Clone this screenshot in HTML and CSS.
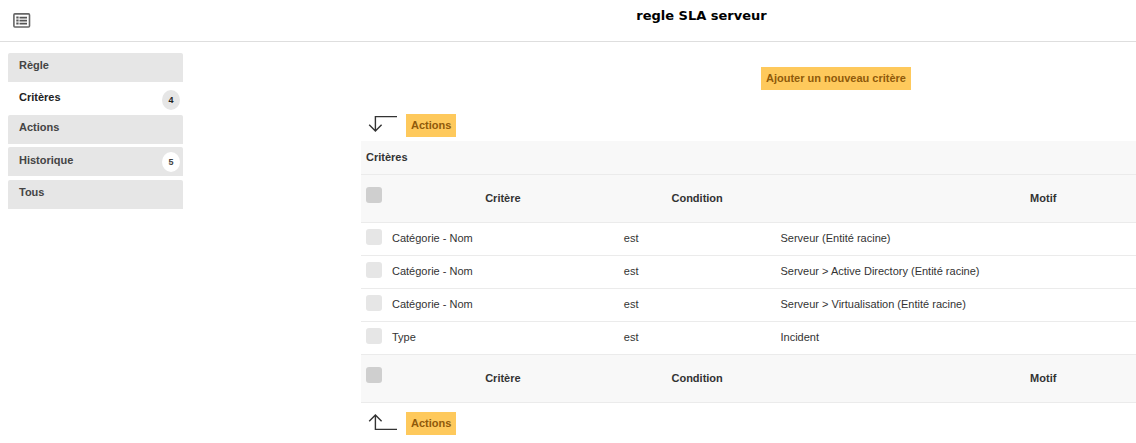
FILE: index.html
```
<!DOCTYPE html>
<html lang="fr">
<head>
<meta charset="utf-8">
<title>regle SLA serveur</title>
<link rel="stylesheet" href="styles.css">
</head>
<body>
<div class="page">
  <header class="header">
    <svg class="list-icon" width="18" height="15" viewBox="0 0 18 15">
      <rect x="0.9" y="0.9" width="15.6" height="13.1" rx="1" fill="none" stroke="#666" stroke-width="1.6"/>
      <path d="M6.5 4.6H14M6.5 7.6H14M6.5 10.6H14" stroke="#555" stroke-width="1.6"/>
      <path d="M3.3 4.6H5.6M3.3 7.6H5.6M3.3 10.6H5.6" stroke="#555" stroke-width="2"/>
    </svg>
    <h1 class="title">regle SLA serveur</h1>
  </header>
  <div class="layout">
    <nav class="tabs">
      <a class="tab">Règle</a>
      <a class="tab tab-active">Critères<span class="badge">4</span></a>
      <a class="tab">Actions</a>
      <a class="tab tab-history">Historique<span class="badge">5</span></a>
      <a class="tab tab-all">Tous</a>
    </nav>
    <main class="content">
      <div class="add-row"><a class="button">Ajouter un nouveau critère</a></div>
      <div class="actions">
        <svg class="arrow" width="30" height="18" viewBox="0 0 30 18"><path d="M29 2.6H7.4V16.6M1.2 10.8L7.4 17L13.6 10.8" fill="none" stroke="#333" stroke-width="1.4"/></svg>
        <a class="button">Actions</a>
      </div>
      <table class="criteria">
        <colgroup><col class="col-check"><col class="col-name"><col class="col-condition"><col></colgroup>
        <thead>
          <tr class="caption"><th colspan="4">Critères</th></tr>
          <tr class="heading"><th><span class="check"></span></th><th>Critère</th><th>Condition</th><th>Motif</th></tr>
        </thead>
        <tbody>
          <tr><td><span class="check"></span></td><td>Catégorie - Nom</td><td>est</td><td>Serveur (Entité racine)</td></tr>
          <tr><td><span class="check"></span></td><td>Catégorie - Nom</td><td>est</td><td>Serveur &gt; Active Directory (Entité racine)</td></tr>
          <tr><td><span class="check"></span></td><td>Catégorie - Nom</td><td>est</td><td>Serveur &gt; Virtualisation (Entité racine)</td></tr>
          <tr><td><span class="check"></span></td><td>Type</td><td>est</td><td>Incident</td></tr>
        </tbody>
        <tfoot>
          <tr class="heading"><th><span class="check"></span></th><th>Critère</th><th>Condition</th><th>Motif</th></tr>
        </tfoot>
      </table>
      <div class="actions actions-bottom">
        <svg class="arrow" width="30" height="19" viewBox="0 0 30 19"><path d="M29 17.4H7.4V3.2M1.2 9.2L7.4 3L13.6 9.2" fill="none" stroke="#333" stroke-width="1.4"/></svg>
        <a class="button">Actions</a>
      </div>
    </main>
  </div>
</div>
</body>
</html>
```

FILE: styles.css
```
* { box-sizing: border-box; }
html { overflow: hidden; }
body {
  margin: 0;
  height: 443px;
  overflow: hidden;
  background: #fff;
  color: #333;
  font: 11px/13px "Liberation Sans", Arial, sans-serif;
}
.page { width: 1403px; }
.header {
  display: grid;
  grid-template-columns: 18px 1fr 18px;
  height: 42px;
  padding: 0 13px;
  border-bottom: 1px solid #dedede;
}
.list-icon { margin-top: 13px; }
.title {
  margin: 8px 0 0;
  color: #000;
  font: bold 13px/16px "DejaVu Sans", Verdana, sans-serif;
  text-align: center;
}
.layout { display: flex; }
.tabs {
  width: 175px;
  margin: 11px 178px 0 8px;
}
.tab {
  display: flex;
  justify-content: space-between;
  height: 29px;
  padding: 6px 3px 0 11px;
  border-radius: 2px 2px 0 0;
  background: #e6e6e6;
  color: #444;
  font-weight: bold;
}
.tab-active {
  margin: 3px 0 1px;
  background: #fff;
  color: #222;
}
.tab-history { margin-top: 3px; padding-top: 7px; }
.tab-all { margin-top: 4px; }
.badge {
  width: 18px;
  height: 20px;
  margin-top: -1px;
  border-radius: 50%;
  background: #e6e6e6;
  font-size: 9px;
  line-height: 20px;
  text-align: center;
}
.tab-history .badge { margin-top: -2px; background: #fff; }
.content { width: 950px; padding-top: 25px; }
.add-row {
  display: flex;
  justify-content: center;
  margin-bottom: 24px;
}
.button {
  height: 23px;
  padding: 5px;
  background: #fec95c;
  color: #8f5a0a;
  font-weight: bold;
}
.actions {
  display: flex;
  height: 27px;
  padding-left: 7px;
}
.arrow { margin-right: 8px; }
.actions-bottom { padding-top: 9px; height: 40px; }
.criteria {
  width: 950px;
  table-layout: fixed;
  border-collapse: separate;
  border-spacing: 0;
}
.col-check { width: 26px; }
.col-name { width: 231.8px; }
.col-condition { width: 156.7px; }
.criteria tr { height: 33px; }
.criteria .caption { height: 34px; }
.criteria .heading { height: 48px; }
.criteria td, .criteria th {
  padding: 0 5px;
  border-bottom: 1px solid #ebebeb;
}
.criteria td { padding-bottom: 2px; }
.criteria th { background: #f8f8f8; }
.criteria .caption th { text-align: left; }
.check {
  display: block;
  width: 16px;
  height: 16px;
  margin-bottom: 2px;
  border-radius: 3px;
  background: #e6e6e6;
}
.heading .check { margin-bottom: 7px; background: #cfcfcf; }
```
